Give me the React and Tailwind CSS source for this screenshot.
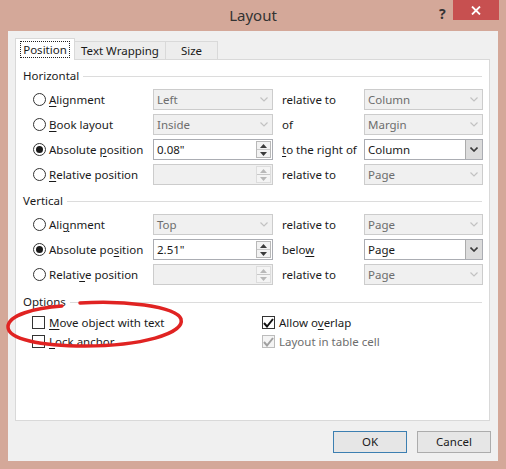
import React from 'react';

const font = { fontFamily: '"Noto Sans", "Liberation Sans", sans-serif' };

function Chevron({ dark }) {
  return (
    <svg width="8" height="5" viewBox="0 0 8 5" className="block">
      <path d="M0.5 0.5 L4 4 L7.5 0.5" fill="none" stroke={dark ? '#3a3a3a' : '#c2c2c2'} strokeWidth={dark ? 1.6 : 1.2} />
    </svg>
  );
}

function Select({ value, enabled, width = 'w-[120px]' }) {
  return (
    <div
      className={`${width} h-[21px] flex items-stretch border ${
        enabled ? 'bg-white border-[#abadb3] text-[#1a1a1a]' : 'bg-[#f0f0f0] border-[#cccccc] text-[#6d6d6d]'
      }`}
    >
      <div className="flex-1 flex items-center pl-[3px] leading-none">{value}</div>
      <div
        className={`w-[17px] flex items-center justify-center ${
          enabled ? 'bg-[#dcdcdc] border-l border-[#acacac]' : 'bg-[#f0f0f0]'
        }`}
      >
        <Chevron dark={enabled} />
      </div>
    </div>
  );
}

function Spin({ value, enabled }) {
  const c = enabled ? '#3a3a3a' : '#b8b8b8';
  return (
    <div
      className={`w-[120px] h-[21px] flex items-stretch border ${
        enabled ? 'bg-white border-[#abadb3]' : 'bg-[#f0f0f0] border-[#cccccc]'
      }`}
    >
      <div className="flex-1 flex items-center pl-[3px] leading-none text-[#1a1a1a]">{value}</div>
      <div className={`w-[15px] my-[1px] mr-[1px] flex flex-col border ${enabled ? 'border-[#b8b8b8] bg-[#f2f2f2]' : 'border-[#dddddd] bg-[#f4f4f4]'}`}>
        <div className="flex-1 flex items-center justify-center border-b border-[#c8c8c8]">
          <svg width="7" height="4" viewBox="0 0 7 4"><path d="M0 4 L3.5 0 L7 4 Z" fill={c} /></svg>
        </div>
        <div className="flex-1 flex items-center justify-center">
          <svg width="7" height="4" viewBox="0 0 7 4"><path d="M0 0 L3.5 4 L7 0 Z" fill={c} /></svg>
        </div>
      </div>
    </div>
  );
}

function Radio({ checked }) {
  return (
    <span className="w-[13px] h-[13px] rounded-full border border-[#333333] bg-white flex items-center justify-center shrink-0">
      {checked && <span className="w-[7px] h-[7px] rounded-full bg-[#1a1a1a]" />}
    </span>
  );
}

function Check({ checked, disabled }) {
  return (
    <span
      className={`w-[13px] h-[13px] border flex items-center justify-center shrink-0 ${
        disabled ? 'border-[#bcbcbc] bg-[#f4f4f4]' : 'border-[#333333] bg-white'
      }`}
    >
      {checked && (
        <svg width="11" height="10" viewBox="0 0 11 10">
          <path d="M1 5 L4 8.5 L10 1" fill="none" stroke={disabled ? '#a0a0a0' : '#111111'} strokeWidth="2" />
        </svg>
      )}
    </span>
  );
}

function Label({ pre, key_, post }) {
  return (
    <span className="whitespace-nowrap">
      {pre}
      <span className="underline underline-offset-2">{key_}</span>
      {post}
    </span>
  );
}

function Row({ label, checked, control, mid, right }) {
  return (
    <div className="h-[25px] flex items-center">
      <div className="w-[120px] flex items-center gap-[3px]">
        <Radio checked={checked} />
        {label}
      </div>
      {control}
      <div className="w-[91px] pl-[9px] whitespace-nowrap">{mid}</div>
      {right}
    </div>
  );
}

function Group({ title, children }) {
  return (
    <div>
      <div className="h-[16px] flex items-center">
        <span className="text-[#1a1a1a] pr-[4px]">{title}</span>
        <div className="flex-1 h-px bg-[#dcdcdc] mr-[7px]" />
      </div>
      {children}
    </div>
  );
}

export default function App() {
  return (
    <div
      className="relative w-[506px] h-[469px] bg-[#d4a899] flex flex-col text-[11.5px] text-[#1a1a1a] overflow-hidden"
      style={font}
    >
      {/* title bar */}
      <div className="h-[31px] relative flex items-center justify-center shrink-0">
        <span className="text-[15px] text-[#333333] pb-[1px]">Layout</span>
        <span className="absolute left-[439px] top-[3px] text-[14px] font-bold text-[#333333]">?</span>
        <div className="absolute right-[7px] top-0 w-[46px] h-[20px] bg-[#c75050] flex items-center justify-center">
          <svg width="10" height="9" viewBox="0 0 10 9">
            <path d="M1 0.5 L9 8.5 M9 0.5 L1 8.5" stroke="#ffffff" strokeWidth="1.8" />
          </svg>
        </div>
      </div>

      {/* client */}
      <div className="mx-[8px] mb-[8px] flex-1 bg-[#f0f0f0] flex flex-col">
        {/* tabs */}
        <div className="flex items-end pl-[7px] pt-[7px] h-[28px]">
          <div className="relative z-10 w-[60px] h-[22px] -mb-px bg-white border border-b-0 border-[#d9d9d9] flex items-center justify-center">
            <span className="border border-dotted border-[#222222] px-[2px] leading-[15px]">Position</span>
          </div>
          <div className="w-[91px] h-[18px] bg-[#ededed] border border-l-0 border-b-0 border-[#d9d9d9] flex items-center justify-center">
            Text Wrapping
          </div>
          <div className="w-[52px] h-[18px] bg-[#ededed] border border-l-0 border-b-0 border-[#d9d9d9] flex items-center justify-center">
            Size
          </div>
        </div>

        {/* panel */}
        <div className="ml-[7px] mr-[8px] h-[362px] bg-white border border-[#d9d9d9] pl-[7px] pt-[8px]">
          <Group title="Horizontal">
            <div className="mt-[3px] pl-[10px]">
              <Row
                label={<Label key_="A" post="lignment" />}
                control={<Select value="Left" />}
                mid="relative to"
                right={<Select value="Column" width="w-[119px]" />}
              />
              <Row
                label={<Label key_="B" post="ook layout" />}
                control={<Select value="Inside" />}
                mid="of"
                right={<Select value="Margin" width="w-[119px]" />}
              />
              <Row
                checked
                label={<Label pre="Absolute " key_="p" post="osition" />}
                control={<Spin value="0.08&quot;" enabled />}
                mid={<Label key_="t" post="o the right of" />}
                right={<Select value="Column" width="w-[119px]" enabled />}
              />
              <Row
                label={<Label key_="R" post="elative position" />}
                control={<Spin value="" />}
                mid="relative to"
                right={<Select value="Page" width="w-[119px]" />}
              />
            </div>
          </Group>

          <div className="mt-[6px]">
            <Group title="Vertical">
              <div className="mt-[3px] pl-[10px]">
                <Row
                  label={<Label pre="Ali" key_="g" post="nment" />}
                  control={<Select value="Top" />}
                  mid="relative to"
                  right={<Select value="Page" width="w-[119px]" />}
                />
                <Row
                  checked
                  label={<Label pre="Absolute po" key_="s" post="ition" />}
                  control={<Spin value="2.51&quot;" enabled />}
                  mid={<Label pre="belo" key_="w" />}
                  right={<Select value="Page" width="w-[119px]" enabled />}
                />
                <Row
                  label={<Label pre="Relati" key_="v" post="e position" />}
                  control={<Spin value="" />}
                  mid="relative to"
                  right={<Select value="Page" width="w-[119px]" />}
                />
              </div>
            </Group>
          </div>

          <div className="mt-[7px]">
            <Group title="Options">
              <div className="mt-[3px] pl-[9px] flex">
                <div className="w-[230px]">
                  <div className="h-[19px] flex items-center gap-[4px]">
                    <Check />
                    <Label key_="M" post="ove object with text" />
                  </div>
                  <div className="h-[19px] flex items-center gap-[4px]">
                    <Check />
                    <Label key_="L" post="ock anchor" />
                  </div>
                </div>
                <div>
                  <div className="h-[19px] flex items-center gap-[4px]">
                    <Check checked />
                    <Label pre="Allow o" key_="v" post="erlap" />
                  </div>
                  <div className="h-[19px] flex items-center gap-[4px] text-[#6d6d6d]">
                    <Check checked disabled />
                    <span>Layout in table cell</span>
                  </div>
                </div>
              </div>
            </Group>
          </div>
        </div>

        {/* buttons */}
        <div className="flex justify-end gap-[10px] mt-[10px] pr-[7px]">
          <button className="w-[74px] h-[22px] border border-[#3c7fb1] bg-[#e6e6e6] text-[#1a1a1a]">OK</button>
          <button className="w-[74px] h-[22px] border border-[#acacac] bg-[#e6e6e6] text-[#1a1a1a]">Cancel</button>
        </div>
      </div>

      {/* red annotation ellipse */}
      <svg className="absolute inset-0 pointer-events-none" width="506" height="469" viewBox="0 0 506 469">
        <path
          d="M80 303 C122 300 176 306 181 319 C185 334 140 346 85 346 C40 346 8 339 8 327 C8 315 35 308 62 306"
          fill="none"
          stroke="#e02322"
          strokeWidth="3.5"
          strokeLinecap="round"
        />
      </svg>
    </div>
  );
}
